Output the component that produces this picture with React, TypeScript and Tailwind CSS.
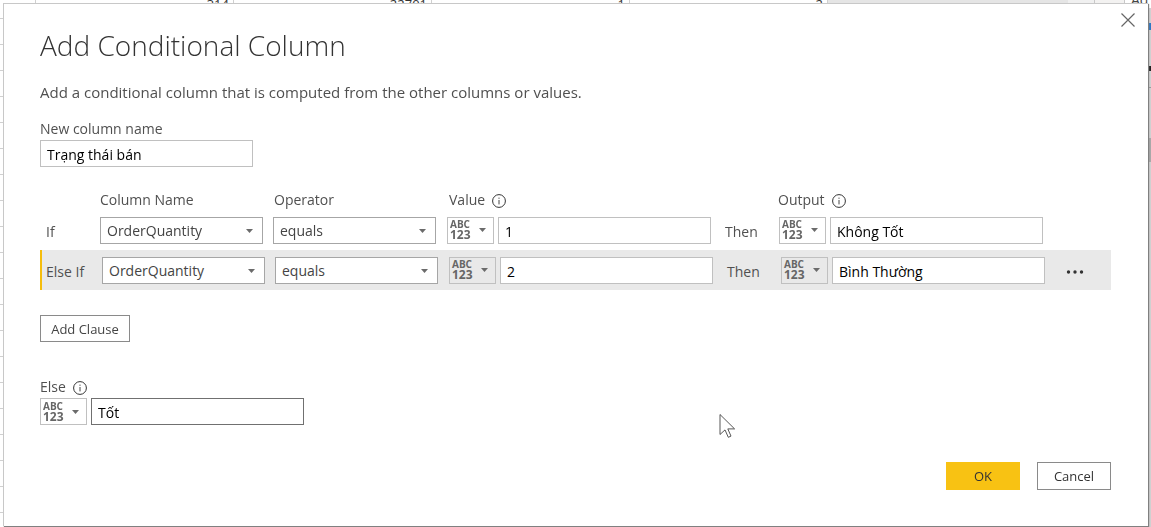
import { useState } from 'react'

type Clause = {
  label: string
  column: string
  operator: string
  value: string
  output: string
  active: boolean
}

const initialClauses: Clause[] = [
  { label: 'If', column: 'OrderQuantity', operator: 'equals', value: '1', output: 'Không Tốt', active: false },
  { label: 'Else If', column: 'OrderQuantity', operator: 'equals', value: '2', output: 'Bình Thường', active: true },
]

// Query preview behind the dialog, only its edges are visible
const previewRows: string[][] = [
  ['314', '22701', '1', '2'],
  ...Array.from({ length: 19 }, () => ['', '', '', '']),
  ['550', '21706', '37', '2'],
]

const Caret = ({ className = '' }: { className?: string }) => (
  <svg className={`pointer-events-none ${className}`} width="7" height="4" viewBox="0 0 7 4" aria-hidden="true">
    <path d="M0 0h7L3.5 4z" fill="#6b6b6b" />
  </svg>
)

const InfoIcon = () => (
  <svg className="mt-0.5" width="14" height="14" viewBox="0 0 14 14" fill="none" aria-hidden="true">
    <circle cx="7" cy="7" r="6.4" stroke="#333" />
    <path d="M7 6v4.4" stroke="#444" />
    <path d="M7 3.6v1.2" stroke="#444" />
  </svg>
)

const TypeButton = ({ label }: { label: string }) => (
  <button
    type="button"
    aria-label={label}
    aria-haspopup="menu"
    className="flex h-[27px] w-[47px] shrink-0 items-center justify-between border border-[#c0c0c0] pr-[7px] pl-0.5 font-bold text-[#666]"
  >
    <span className="flex flex-col items-start">
      <span className="text-[10px] leading-[10px]">ABC</span>
      <span className="text-[12px] leading-[12px]">123</span>
    </span>
    <Caret />
  </button>
)

type SelectProps = {
  label: string
  value: string
  options: string[]
}

const SelectBox = ({ label, value, options }: SelectProps) => (
  <div className="relative w-[163px] shrink-0">
    <select
      aria-label={label}
      defaultValue={value}
      className="block h-[27px] w-full appearance-none border border-[#a6a6a6] bg-white pt-0.5 pr-6 pl-1.5 text-[14px] text-[#444] outline-none"
    >
      {options.map((option) => (
        <option key={option}>{option}</option>
      ))}
    </select>
    <Caret className="absolute top-3 right-2.5" />
  </div>
)

type TextBoxProps = {
  id?: string
  label?: string
  value: string
  focused?: boolean
  onChange: (value: string) => void
}

const TextBox = ({ id, label, value, focused = false, onChange }: TextBoxProps) => (
  <input
    id={id}
    type="text"
    aria-label={label}
    value={value}
    onChange={(e) => onChange(e.target.value)}
    className={`h-[27px] w-[213px] shrink-0 border bg-white px-1.5 pt-0.5 text-[14px] text-black outline-none ${
      focused ? 'border-[#707070]' : 'border-[#c0c0c0]'
    }`}
  />
)

type ClauseRowProps = {
  clause: Clause
  onChange: (patch: Partial<Clause>) => void
}

const ClauseRow = ({ clause, onChange }: ClauseRowProps) => (
  <div className={`flex h-10 items-center ${clause.active ? 'border-l-2 border-[#f5bd0c] bg-[#e9e9e9]' : ''}`}>
    <span className={`w-15 shrink-0 pt-1 ${clause.active ? 'pl-1' : 'pl-1.5'}`}>{clause.label}</span>
    <div className="flex gap-2.5">
      <SelectBox label={`${clause.label} column name`} value={clause.column} options={['OrderQuantity']} />
      <SelectBox label={`${clause.label} operator`} value={clause.operator} options={['equals']} />
    </div>
    <div className="ml-[11px] flex gap-1">
      <TypeButton label={`${clause.label} value type`} />
      <TextBox label={`${clause.label} value`} value={clause.value} onChange={(value) => onChange({ value })} />
    </div>
    <span className="w-17 shrink-0 pt-1 pl-3.5">Then</span>
    <div className="flex gap-1">
      <TypeButton label={`${clause.label} output type`} />
      <TextBox label={`${clause.label} output`} value={clause.output} onChange={(output) => onChange({ output })} />
    </div>
    {clause.active && (
      <button type="button" aria-label="More options" className="ml-4 flex h-7 w-7 items-center justify-center">
        <svg className="mt-1" width="18" height="4" viewBox="0 0 18 4" fill="#333" aria-hidden="true">
          <circle cx="2.5" cy="2" r="1.7" />
          <circle cx="9" cy="2" r="1.7" />
          <circle cx="15.5" cy="2" r="1.7" />
        </svg>
      </button>
    )}
  </div>
)

const Preview = () => (
  <div className="flex h-screen overflow-hidden bg-[#e5e5e5]" aria-hidden="true">
    <table className="-mt-[7px] w-[828px] shrink-0 table-fixed border-separate border-spacing-0 self-start bg-white text-[13px] text-[#333]">
      <tbody>
        {previewRows.map((row, i) => (
          <tr key={i} className="h-[26px]">
            <td className="w-9 border-r border-b border-[#d0d0d0] p-0" />
            {row.map((cell, j) => (
              <td key={j} className="border-r border-b border-[#d0d0d0] p-0 pr-1 pb-1 text-right leading-5">
                {cell}
              </td>
            ))}
          </tr>
        ))}
      </tbody>
    </table>
    <div className="flex-1" />
    <div className="w-[27px] border-r border-[#c8c8c8] bg-[#f0f0f0]" />
    <div className="w-[29px] bg-[#f3f2f1]" />
    <div className="flex w-[27px] shrink-0 flex-col border-l border-[#c8c8c8] bg-[#d0d0d0]">
      <div className="h-2 bg-white pl-1.5 text-[14px] leading-[0px] text-[#444]">Ad</div>
      <div className="mt-[15px] h-[7px] bg-[#2f78c4]" />
      <div className="mt-9 h-[5px] bg-[#222]" />
      <div className="mt-4 h-px bg-[#999]" />
      <div className="mt-[50px] h-6 bg-[#a8a8a8]" />
    </div>
  </div>
)

const Cursor = () => (
  <svg
    className="pointer-events-none fixed top-[413px] left-[719px]"
    width="17"
    height="26"
    viewBox="0 0 17 26"
    aria-hidden="true"
  >
    <path
      d="M1 1.5v20l5-4.6 3.3 7.4 2.7-1.2-3.2-7.2h6.8z"
      fill="#fff"
      stroke="#444"
      strokeWidth="0.9"
    />
  </svg>
)

const App = () => {
  const [columnName, setColumnName] = useState('Trạng thái bán')
  const [clauses, setClauses] = useState(initialClauses)
  const [elseValue, setElseValue] = useState('Tốt')

  const updateClause = (index: number, patch: Partial<Clause>) => {
    setClauses((prev) => prev.map((clause, i) => (i === index ? { ...clause, ...patch } : clause)))
  }

  return (
    <div className="font-['Open_Sans','Noto_Sans',sans-serif]">
      <Preview />

      <div className="fixed inset-0 flex p-[3px] pb-px">
        <form
          role="dialog"
          aria-labelledby="dialog-title"
          onSubmit={(e) => e.preventDefault()}
          className="relative flex flex-1 flex-col border-t border-l border-[#c8c8c8] bg-white pt-[23px] pr-[37px] pb-9 pl-9 text-[14px] leading-5 text-[#505050] shadow-[1px_1px_1px_#808080]"
        >
          <button type="button" aria-label="Close" className="absolute top-2 right-3 p-px">
            <svg width="14" height="14" viewBox="0 0 14 14" stroke="#666" strokeWidth="1.2" aria-hidden="true">
              <path d="M.5.5l13 13M13.5.5l-13 13" />
            </svg>
          </button>

          <h1 id="dialog-title" className="text-[28px] leading-9 font-light text-[#333]">
            Add Conditional Column
          </h1>
          <p className="mt-[19px] text-[15px]">
            Add a conditional column that is computed from the other columns or values.
          </p>

          <label htmlFor="column-name" className="mt-[17px] mb-px">
            New column name
          </label>
          <TextBox id="column-name" value={columnName} onChange={setColumnName} />

          <div className="mt-[23px] flex h-5 items-center pl-15">
            <span className="w-[174px] shrink-0">Column Name</span>
            <span className="w-[175px] shrink-0">Operator</span>
            <span className="flex w-[329px] shrink-0 items-center gap-[7px]">
              Value <InfoIcon />
            </span>
            <span className="flex items-center gap-[7px]">
              Output <InfoIcon />
            </span>
          </div>

          {clauses.map((clause, i) => (
            <ClauseRow key={clause.label} clause={clause} onChange={(patch) => updateClause(i, patch)} />
          ))}

          <button
            type="button"
            className="mt-[25px] h-[27px] w-[90px] self-start border border-[#8a8a8a] text-[13px] text-[#444]"
          >
            Add Clause
          </button>

          <label htmlFor="else-value" className="mt-[35px] mb-px flex items-center gap-[7px]">
            Else <InfoIcon />
          </label>
          <div className="flex gap-1">
            <TypeButton label="Else type" />
            <TextBox id="else-value" value={elseValue} onChange={setElseValue} focused />
          </div>

          <div className="mt-auto flex justify-end gap-[17px] text-[13px] text-[#333]">
            <button type="submit" className="h-7 w-[74px] bg-[#f8c213]">
              OK
            </button>
            <button type="button" className="h-7 w-[74px] border border-[#8a8a8a]">
              Cancel
            </button>
          </div>
        </form>
      </div>

      <Cursor />
    </div>
  )
}

export default App
